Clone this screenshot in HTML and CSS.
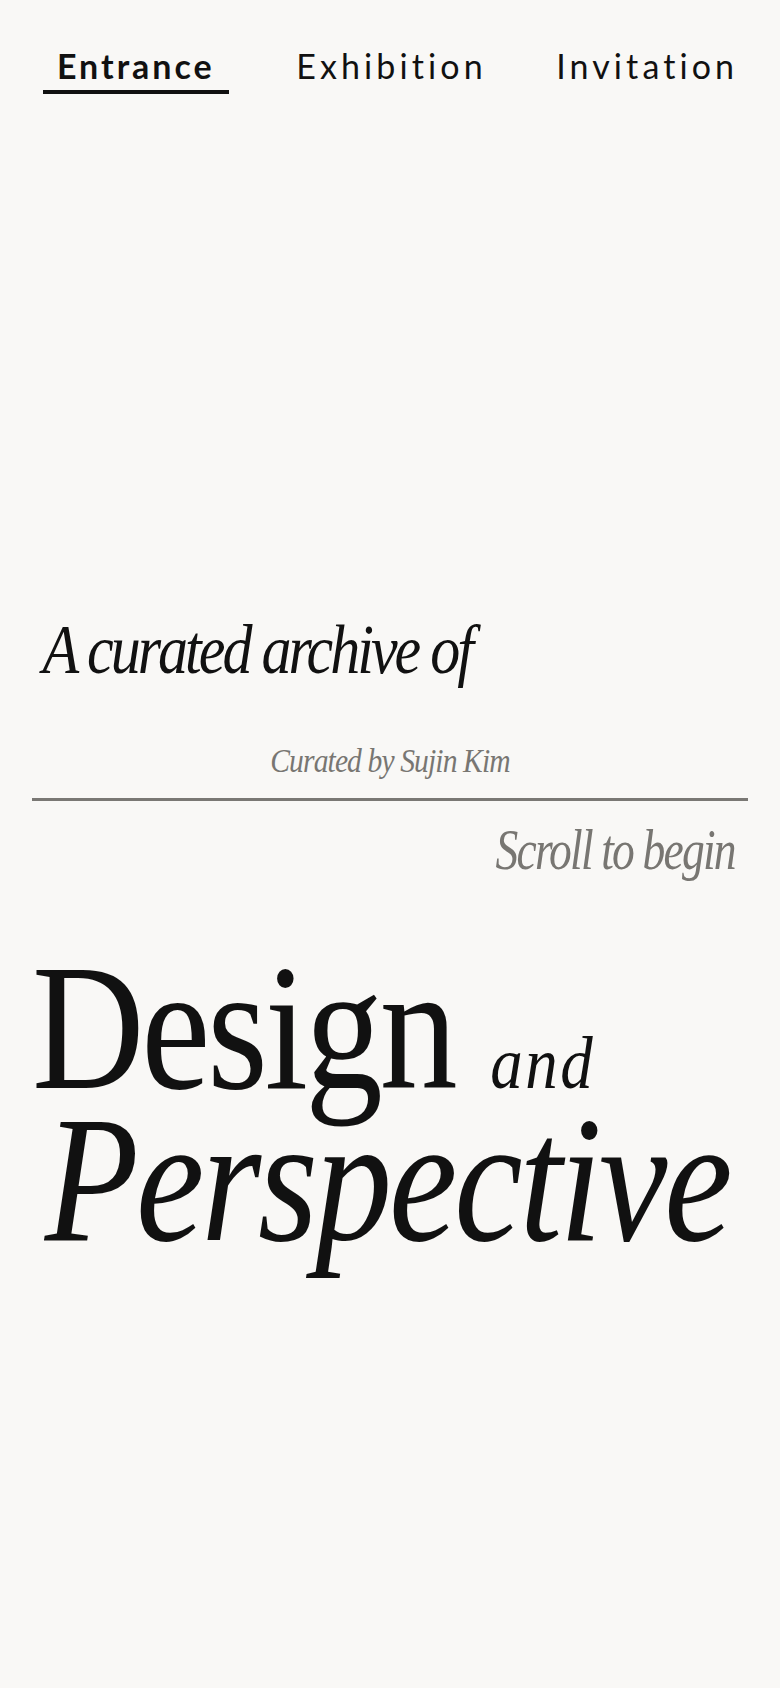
FILE: index.html
```html
<!DOCTYPE html>
<html lang="en">
<head>
<meta charset="utf-8">
<meta name="viewport" content="width=device-width, initial-scale=1">
<title>Design and Perspective</title>
<link rel="stylesheet" href="styles.css">
</head>
<body>
<header class="nav">
  <a class="tab tab-active" href="#">Entrance</a>
  <a class="tab" href="#">Exhibition</a>
  <a class="tab" href="#">Invitation</a>
</header>
<main class="hero">
  <p class="archive">A curated archive of</p>
  <p class="curator">Curated by Sujin Kim</p>
  <hr class="rule">
  <p class="scroll">Scroll to begin</p>
  <h1 class="title">
    <span class="title-line title-design">Design <em class="title-and">and</em></span>
    <em class="title-line title-persp">Perspective</em>
  </h1>
</main>
</body>
</html>
```

FILE: styles.css
```css
html, body {
  margin: 0;
  padding: 0;
}

body {
  background: #f9f8f6;
  color: #111111;
  min-height: 1688px;
  font-family: "Liberation Serif", "Times New Roman", serif;
  overflow-x: hidden;
}

.nav {
  display: grid;
  grid-template-columns: repeat(3, 1fr);
  justify-items: center;
  align-items: start;
  padding: 46px 5px 0 8px;
}

.tab {
  font-family: Lato, "Liberation Sans", sans-serif;
  font-size: 34px;
  line-height: 40px;
  letter-spacing: 4.1px;
  font-weight: 400;
  color: #111111;
  text-decoration: none;
  padding: 0 14px 4px;
  border-bottom: 4px solid transparent;
}

.tab-active {
  font-weight: 700;
  letter-spacing: 3px;
  border-bottom-color: #111111;
}

.hero {
  padding: 0 32px;
}

.archive {
  margin: 516px 0 0;
  padding-left: 12px;
  font-style: italic;
  font-size: 69px;
  line-height: 80px;
  letter-spacing: -0.05em;
  transform: scaleX(0.87);
  transform-origin: left center;
  white-space: nowrap;
}

.curator {
  margin: 51px 0 0;
  text-align: center;
  font-style: italic;
  font-size: 34px;
  line-height: 40px;
  letter-spacing: -0.03em;
  color: #787672;
  transform: scaleX(0.87);
  transform-origin: center center;
  white-space: nowrap;
}

.rule {
  margin: 17px 0 0;
  border: 0;
  border-top: 3px solid #7a7874;
  height: 0;
}

.scroll {
  margin: 14px 0 0;
  padding-right: 17px;
  text-align: right;
  font-style: italic;
  font-size: 58px;
  line-height: 70px;
  letter-spacing: -0.04em;
  color: #787672;
  transform: scaleX(0.785);
  transform-origin: right center;
  white-space: nowrap;
}

.title {
  margin: 67px 0 0;
  font-weight: 400;
  font-size: 180px;
  white-space: nowrap;
}

.title-line {
  display: block;
  line-height: 152px;
  transform-origin: left center;
}

.title-design {
  letter-spacing: -0.02em;
  transform: scaleX(0.865);
}

.title-and {
  font-style: italic;
  font-size: 75px;
  line-height: 1;
  letter-spacing: 0.04em;
}

.title-persp {
  font-style: italic;
  padding-left: 15px;
  letter-spacing: -0.02em;
  transform: scaleX(0.856);
}
```
